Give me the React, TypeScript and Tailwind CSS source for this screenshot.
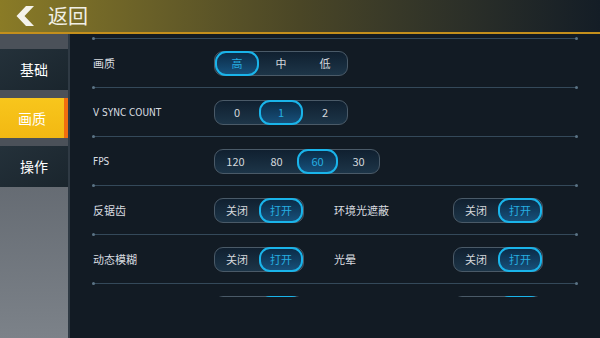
import React from "react";

const cjk = "font-['Noto_Sans_CJK_SC','Noto_Sans',sans-serif]";

function Divider() {
  return (
    <div className="relative h-px bg-[#34495a]">
      <span className="absolute -left-px -top-px w-[3px] h-[3px] rounded-full bg-[#5b7486]" />
      <span className="absolute -right-px -top-px w-[3px] h-[3px] rounded-full bg-[#5b7486]" />
    </div>
  );
}

function Segment({ items, active, itemW }: { items: string[]; active: number; itemW: string }) {
  return (
    <div className="flex h-[25px] rounded-[9px] border border-[#4a5a68] bg-gradient-to-b from-[#102030] to-[#1d3548]">
      {items.map((it, i) => (
        <div
          key={i}
          className={
            i === active
              ? `${itemW} -my-px flex items-center justify-center rounded-[11px] border-2 border-[#1ab4ea] bg-gradient-to-b from-[#0b2c48] to-[#17507a] text-[#26aee2] text-[11px] ${cjk}`
              : `${itemW} flex items-center justify-center text-[#d4d8dc] text-[11px] ${cjk}`
          }
        >
          {it}
        </div>
      ))}
    </div>
  );
}

function Label({ text, w }: { text: string; w: string }) {
  return <div className={`${w} text-[11px] text-[#d9dde0] ${cjk}`}>{text}</div>;
}

export default function App() {
  const toggle = <Segment items={["关闭", "打开"]} active={1} itemW="w-[44px]" />;
  // next row, scrolled out of view: only the top edge shows
  const hidden = <Segment items={["", ""]} active={1} itemW="w-[44px]" />;
  return (
    <div className="w-[600px] h-[338px] overflow-hidden flex flex-col bg-[#121b24]">
      {/* Header */}
      <div className="h-[34px] shrink-0 flex items-center bg-gradient-to-r from-[#8a7b26] via-[#4a4626] to-[#141d26] border-b-2 border-[#c48f1c]">
        <svg className="ml-[15px] w-[20px] h-[22px]" viewBox="0 0 20 22">
          <path d="M11 1 L19 1 L9.5 11 L19 21 L11 21 L1.5 11 Z" fill="#f4f2ea" />
        </svg>
        <span className={`ml-[13px] text-[20px] leading-none text-[#f1efe6] ${cjk}`}>返回</span>
      </div>

      <div className="flex flex-1 min-h-0">
        {/* Sidebar */}
        <div className="w-[68px] flex flex-col bg-gradient-to-b from-[#50565e] to-[#7c8289]">
          <div className="h-[15px] bg-[#4b5159]" />
          <div className={`h-[41px] flex items-center justify-center bg-gradient-to-br from-[#24313a] to-[#1a252d] text-[14px] text-white ${cjk}`}>
            基础
          </div>
          <div className="h-[8px] bg-[#4b5159]" />
          <div className={`h-[40px] flex items-center justify-center bg-gradient-to-b from-[#f8c61c] to-[#f2b812] border-r-[4px] border-[#f06e10] text-[14px] text-white ${cjk}`}>
            画质
          </div>
          <div className="h-[8px] bg-[#4b5159]" />
          <div className={`h-[41px] flex items-center justify-center bg-gradient-to-br from-[#24313a] to-[#1a252d] text-[14px] text-white ${cjk}`}>
            操作
          </div>
        </div>
        <div className="w-[2px] bg-[#2f3a44]" />

        {/* Content */}
        <div className="flex-1 min-w-0">
          <div className="h-[263px] overflow-hidden pt-[4px] pl-[23px] pr-[23px]">
            <Divider />
            <div className="h-[48px] flex items-center">
              <Label text="画质" w="w-[121px]" />
              <Segment items={["高", "中", "低"]} active={0} itemW="w-[44px]" />
            </div>
            <Divider />
            <div className="h-[48px] flex items-center">
              <div className="w-[121px] text-[10px] text-[#d9dde0] font-['DejaVu_Sans_Condensed','Liberation_Sans',sans-serif]">
                V SYNC COUNT
              </div>
              <Segment items={["0", "1", "2"]} active={1} itemW="w-[44px]" />
            </div>
            <Divider />
            <div className="h-[48px] flex items-center">
              <div className="w-[121px] text-[10px] text-[#d9dde0] font-['DejaVu_Sans_Condensed','Liberation_Sans',sans-serif]">
                FPS
              </div>
              <Segment items={["120", "80", "60", "30"]} active={2} itemW="w-[41px]" />
            </div>
            <Divider />
            <div className="h-[48px] flex items-center">
              <Label text="反锯齿" w="w-[121px]" />
              {toggle}
              <Label text="环境光遮蔽" w="ml-[30px] w-[119px]" />
              {toggle}
            </div>
            <Divider />
            <div className="h-[48px] flex items-center">
              <Label text="动态模糊" w="w-[121px]" />
              {toggle}
              <Label text="光晕" w="ml-[30px] w-[119px]" />
              {toggle}
            </div>
            <Divider />
            <div className="h-[48px] flex items-center">
              <div className="w-[121px]" />
              {hidden}
              <div className="ml-[30px] w-[119px]" />
              {hidden}
            </div>
          </div>
        </div>
      </div>
    </div>
  );
}
